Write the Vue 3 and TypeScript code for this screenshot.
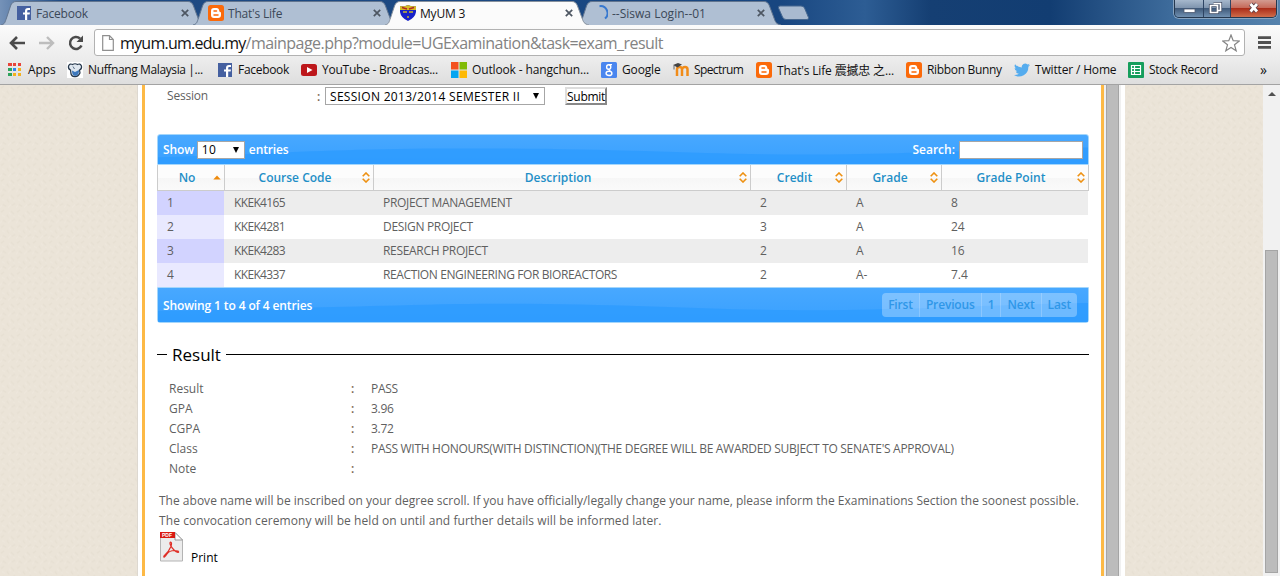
<script setup lang="ts">
interface Tab {
  icon: string;
  title: string;
  active?: boolean;
}

interface Bookmark {
  icon: string;
  name: string;
  width: number;
  tracking: number;
}

interface Course {
  no: number;
  code: string;
  description: string;
  credit: number;
  grade: string;
  point: string;
}

const tabs: Tab[] = [
  { icon: 'facebook', title: 'Facebook' },
  { icon: 'blogger', title: "That's Life" },
  { icon: 'crest', title: 'MyUM 3', active: true },
  { icon: 'spinner', title: '--Siswa Login--01' },
];

const bookmarks: Bookmark[] = [
  { icon: 'apps', name: 'Apps', width: 60, tracking: -0.1 },
  { icon: 'nuffnang', name: 'Nuffnang Malaysia |...', width: 150, tracking: -0.38 },
  { icon: 'facebook', name: 'Facebook', width: 84, tracking: -0.3 },
  { icon: 'youtube', name: 'YouTube - Broadcas...', width: 150, tracking: -0.24 },
  { icon: 'outlook', name: 'Outlook - hangchun...', width: 150, tracking: -0.14 },
  { icon: 'google', name: 'Google', width: 72, tracking: -0.15 },
  { icon: 'spectrum', name: 'Spectrum', width: 83, tracking: -0.6 },
  { icon: 'blogger', name: "That's Life 震撼忠 之...", width: 150, tracking: -0.16 },
  { icon: 'blogger', name: 'Ribbon Bunny', width: 108, tracking: -0.33 },
  { icon: 'twitter', name: 'Twitter / Home', width: 114, tracking: -0.16 },
  { icon: 'sheets', name: 'Stock Record', width: 110, tracking: -0.3 },
];

const columns = ['No', 'Course Code', 'Description', 'Credit', 'Grade', 'Grade Point'];

const courses: Course[] = [
  { no: 1, code: 'KKEK4165', description: 'PROJECT MANAGEMENT', credit: 2, grade: 'A', point: '8' },
  { no: 2, code: 'KKEK4281', description: 'DESIGN PROJECT', credit: 3, grade: 'A', point: '24' },
  { no: 3, code: 'KKEK4283', description: 'RESEARCH PROJECT', credit: 2, grade: 'A', point: '16' },
  { no: 4, code: 'KKEK4337', description: 'REACTION ENGINEERING FOR BIOREACTORS', credit: 2, grade: 'A-', point: '7.4' },
];

const results = [
  { label: 'Result', value: 'PASS' },
  { label: 'GPA', value: '3.96' },
  { label: 'CGPA', value: '3.72' },
  { label: 'Class', value: "PASS WITH HONOURS(WITH DISTINCTION)(THE DEGREE WILL BE AWARDED SUBJECT TO SENATE'S APPROVAL)" },
  { label: 'Note', value: '' },
];

const pages = ['First', 'Previous', '1', 'Next', 'Last'];
</script>

<template>
  <!-- shared icon shapes -->
  <svg class="defs" width="0" height="0">
    <symbol id="facebook" viewBox="0 0 16 16">
      <rect x="1" y="1" width="14" height="14" fill="#4560a0" />
      <path d="M9 15V9.500H7V7.500H9V6C9 4 10 3 12 3H14V5H12.500C11.500 5 11.200 5.500 11.200 6.300V7.500H14L13.600 9.500H11.200V15Z" fill="#fff" />
    </symbol>
    <symbol id="blogger" viewBox="0 0 16 16">
      <rect width="16" height="16" rx="2.500" fill="#fb6a0a" />
      <path d="M6 3H8.500Q11 3 11.300 6Q11.400 7 12.200 7T13 8V10Q13 13 10 13H6Q3 13 3 10V6Q3 3 6 3Z" fill="#fff" />
      <path d="M6 6H8.500M6 10H10" stroke="#fb6a0a" stroke-width="1.500" stroke-linecap="round" />
    </symbol>
    <symbol id="crest" viewBox="0 0 16 16">
      <path d="M0 1Q4 2 8 0Q12 2 16 1V7Q15 13 8 16Q1 13 0 7Z" fill="#1722c8" />
      <path d="M0 1Q4 2 8 0Q12 2 16 1V5H0Z" fill="#d6bc24" />
      <path d="M2 2.500L7 4M9 4L14 2.500" stroke="#b52820" stroke-width="1.500" />
      <path d="M3 7H7M9 7H13M7 12L9 12" stroke="#c9b630" stroke-width="1.300" fill="none" />
    </symbol>
    <symbol id="spinner" viewBox="0 0 16 16">
      <path d="M7.500 1.200A7 7 0 0 1 13 13.500" fill="none" stroke="#3778cf" stroke-width="2" />
    </symbol>
    <symbol id="apps" viewBox="0 0 16 16">
      <path d="M1 1H5V4H1ZM6 1H9V4H6ZM11 1H14V4H11Z" fill="#e8443a" />
      <path d="M1 6H5V9H1ZM1 11H5V14H1Z" fill="#2da35c" />
      <path d="M6 6H9V9H6Z" fill="#2c86ef" />
      <path d="M11 6H14V9H11ZM6 11H9V14H6ZM11 11H14V14H11Z" fill="#f3b11f" />
    </symbol>
    <symbol id="nuffnang" viewBox="0 0 16 16">
      <rect width="16" height="16" fill="#fff" />
      <path d="M3.500 8Q1 7 1.500 4Q3 1 5.500 2.500Q8 1 10.500 2.500Q13 1 14.500 4Q15 7 12.500 8L13 11Q11 15 8 14.500Q5 15 4 12Z" fill="#dfe7ef" stroke="#26384c" stroke-width="1.200" />
      <path d="M5 8.500L8 10L12 8Q12.500 13.500 8 14Q5 13.500 5 8.500Z" fill="#3c78bd" />
      <path d="M6 4.500L7.500 7" stroke="#5c7088" />
    </symbol>
    <symbol id="youtube" viewBox="0 0 16 16">
      <rect y="2" width="16" height="12" rx="2.500" fill="#bd171b" />
      <path d="M6 5L11.500 8L6 11Z" fill="#fff" />
    </symbol>
    <symbol id="outlook" viewBox="0 0 16 16">
      <path d="M0 0H7.500V7.500H0Z" fill="#f3511f" />
      <path d="M8.500 0H16V7.500H8.500Z" fill="#80bb06" />
      <path d="M0 8.500H7.500V16H0Z" fill="#06a5f0" />
      <path d="M8.500 8.500H16V16H8.500Z" fill="#fdb905" />
    </symbol>
    <symbol id="google" viewBox="0 0 16 16">
      <rect width="16" height="16" rx="1.500" fill="#4a86ef" />
      <ellipse cx="7.700" cy="5" rx="2.100" ry="2.300" fill="none" stroke="#fff" stroke-width="1.400" />
      <ellipse cx="8" cy="11.400" rx="2.900" ry="2.100" fill="none" stroke="#fff" stroke-width="1.400" />
      <path d="M8 2.600H11M7.600 7.300L9.500 9.300" stroke="#fff" stroke-width="1.200" />
    </symbol>
    <symbol id="spectrum" viewBox="0 0 16 16">
      <path d="M4 14V7.500Q4 5 6.500 5T9 7.500V14M9 7.500Q9.500 5 12 5T14.500 7.500V14" fill="none" stroke="#f18c19" stroke-width="2.500" />
      <path d="M0 3L5 1L9 2.500L4.500 5.500Z" fill="#444" />
      <path d="M1 3.500V7.500" stroke="#666" />
    </symbol>
    <symbol id="twitter" viewBox="0 0 24 24">
      <path d="M24 4.600a10 10 0 0 1-2.800.8 5 5 0 0 0 2.100-2.700 10 10 0 0 1-3.100 1.200 4.900 4.900 0 0 0-8.400 4.500A14 14 0 0 1 1.700 3.200a4.900 4.900 0 0 0 1.500 6.500 4.900 4.900 0 0 1-2.200-.6 4.900 4.900 0 0 0 3.900 4.900 5 5 0 0 1-2.200.1 4.900 4.900 0 0 0 4.600 3.400A9.900 9.900 0 0 1 0 19.500 14 14 0 0 0 21.500 7.100 10 10 0 0 0 24 4.600z" fill="#55acee" />
    </symbol>
    <symbol id="sheets" viewBox="0 0 16 16">
      <rect width="16" height="16" rx="1" fill="#159e5c" />
      <path d="M3.500 3.500H12.500V12.500H3.500ZM3.500 6.500H12.500M3.500 9.500H12.500M6.500 3.500V12.500" fill="none" stroke="#fff" stroke-width="1.200" />
    </symbol>
    <symbol id="sort-both" viewBox="0 0 8 11">
      <path d="M.7 4.300L4 1L7.300 4.300M.7 6.700L4 10L7.300 6.700" fill="none" stroke="#ee9112" stroke-width="1.600" />
    </symbol>
    <symbol id="sort-asc" viewBox="0 0 8 11">
      <path d="M.3 7.500L4 3.500L7.700 7.500Z" fill="#ee8a0c" />
    </symbol>
    <pattern id="paper" width="16" height="15.500" patternUnits="userSpaceOnUse">
      <rect width="16" height="16" fill="#ebe4d8" />
      <path d="M1 3L4 1M7 6L9 9M11 2L14 5M3 11L6 13M12 12L15 10" stroke="#e7e0d3" stroke-width="1.300" />
      <path d="M2 6L5 8M9 3L11 6M8 14L11 11M13 7L15 8M0 14L2 12" stroke="#eee7dc" stroke-width="1.300" />
    </pattern>
  </svg>

  <div class="browser">
    <header class="titlebar">
      <div v-for="tab in tabs" :key="tab.title" class="tab" :class="{ active: tab.active }">
        <svg class="tab-shape" viewBox="0 0 206 25">
          <path d="M0 25C4 24 4 22 5.500 18L9.500 6Q11 1.500 15 1.500H187Q191 1.500 192.500 6L197 18C198.500 22 199 24 204 25" />
        </svg>
        <svg class="icon"><use :href="'#' + tab.icon" /></svg>
        <span class="tab-title">{{ tab.title }}</span>
        <svg class="close" viewBox="0 0 8 8"><path d="M.8.8L7.200 7.200M7.200.8L.8 7.200" /></svg>
      </div>
      <svg class="new-tab" viewBox="0 0 34 16">
        <path d="M1.500 3Q1 1 3 1H24Q26.500 1 27.500 3L31.500 12.500Q32 14.500 30 14.500H9Q6.500 14.500 5.500 12Z" />
      </svg>
      <div class="window-buttons">
        <div class="win"><svg viewBox="0 0 28 18"><rect x="9" y="9" width="11" height="3.500" fill="#fff" stroke="#4d5970" stroke-width=".8" /></svg></div>
        <div class="win restore">
          <svg viewBox="0 0 28 18">
            <path d="M10.500 3.500H17.500V10.500H15M7.500 5.500H14.500V12.500H7.500Z" fill="none" stroke="#434e66" stroke-width="3.200" />
            <path d="M10.500 3.500H17.500V10.500H15M7.500 5.500H14.500V12.500H7.500Z" fill="none" stroke="#fff" stroke-width="1.700" />
          </svg>
        </div>
        <div class="win exit">
          <svg viewBox="0 0 28 18">
            <path d="M10.500 4L17 11.500M17 4L10.500 11.500" stroke="#553b44" stroke-width="4.400" />
            <path d="M10.500 4L17 11.500M17 4L10.500 11.500" stroke="#fff" stroke-width="2.800" />
          </svg>
        </div>
      </div>
    </header>

    <div class="toolbar">
      <svg class="nav" viewBox="0 0 18 16"><path d="M2 8H16M8 2L2 8L8 14" fill="none" stroke="#4b4b4b" stroke-width="2.600" /></svg>
      <svg class="nav" viewBox="0 0 18 16"><path d="M1 8H15M9 2L15 8L9 14" fill="none" stroke="#bdbdbd" stroke-width="2.400" /></svg>
      <svg class="nav" viewBox="0 0 18 16">
        <path d="M14.500 10.500A6 6 0 1 1 13 3.500" fill="none" stroke="#4b4b4b" stroke-width="2.500" />
        <path d="M16 .5V7H9.500Z" fill="#4b4b4b" />
      </svg>
      <div class="address">
        <svg class="page-icon" viewBox="0 0 12 16"><path d="M.7.7H7.500L11.300 4.500V15.300H.7ZM7.500.7V4.500H11.300" fill="#fff" stroke="#8f8f8f" stroke-width="1.200" /></svg>
        <span class="url"><b>myum.um.edu.my</b>/mainpage.php?module=UGExamination&amp;task=exam_result</span>
        <svg class="star" viewBox="0 0 18 18"><path d="M9 1L11.200 6.700L17.300 7L12.500 10.800L14.200 16.800L9 13.400L3.800 16.800L5.500 10.800L.7 7L6.800 6.700Z" fill="#fff" stroke="#858585" stroke-width="1.200" /></svg>
      </div>
      <svg class="menu" viewBox="0 0 13 13"><path d="M0 1.700H13M0 6.500H13M0 11.300H13" stroke="#505050" stroke-width="2.800" /></svg>
    </div>

    <nav class="bookmarks">
      <div
        v-for="item in bookmarks"
        :key="item.name"
        class="bookmark"
        :style="{ width: item.width + 'px', letterSpacing: item.tracking + 'px' }"
      >
        <svg class="icon"><use :href="'#' + item.icon" /></svg>
        <span>{{ item.name }}</span>
      </div>
      <span class="more">»</span>
    </nav>

    <div class="viewport">
      <svg class="paper left"><rect width="100%" height="100%" fill="url(#paper)" /></svg>
      <main class="page">
        <div class="session">
          <span class="session-label">Session</span>
          <span class="session-colon">:</span>
          <div class="select semester"><span>SESSION 2013/2014 SEMESTER II</span><i></i></div>
          <button class="submit">Submit</button>
        </div>

        <section class="datatable">
          <div class="bar top">
            <svg class="wave" viewBox="0 0 932 30" preserveAspectRatio="none"><path d="M0 23C110 20 170 14 300 14C470 13 560 22 690 20C800 18 860 14 932 13V30H0Z" /></svg>
            <span>Show</span>
            <div class="select length"><span>10</span><i></i></div>
            <span>entries</span>
            <span class="search-label">Search:</span>
            <input class="search" type="text">
          </div>
          <div class="row head">
            <div v-for="(col, i) in columns" :key="col" class="cell">
              <span>{{ col }}</span>
              <svg class="sort"><use :href="i === 0 ? '#sort-asc' : '#sort-both'" /></svg>
            </div>
          </div>
          <div v-for="course in courses" :key="course.no" class="row" :class="{ odd: course.no % 2 }">
            <div class="cell sorted">{{ course.no }}</div>
            <div class="cell code">{{ course.code }}</div>
            <div class="cell description">{{ course.description }}</div>
            <div class="cell">{{ course.credit }}</div>
            <div class="cell">{{ course.grade }}</div>
            <div class="cell">{{ course.point }}</div>
          </div>
          <div class="bar bottom">
            <svg class="wave" viewBox="0 0 932 34" preserveAspectRatio="none"><path d="M0 23C110 21 170 19 300 16C470 14 560 24 690 22C800 20 860 16 932 15V34H0Z" /></svg>
            <span>Showing 1 to 4 of 4 entries</span>
            <div class="pager">
              <span v-for="page in pages" :key="page" class="page-link">{{ page }}</span>
            </div>
          </div>
        </section>

        <h2 class="legend">Result</h2>
        <dl class="results">
          <div v-for="item in results" :key="item.label" class="result">
            <dt>{{ item.label }}</dt>
            <dd class="colon">:</dd>
            <dd class="value">{{ item.value }}</dd>
          </div>
        </dl>
        <p class="notes">
          <span class="inscription">The above name will be inscribed on your degree scroll. If you have officially/legally change your name, please inform the Examinations Section the soonest possible.</span>
          <span class="ceremony">The convocation ceremony will be held on until and further details will be informed later.</span>
        </p>
        <div class="print">
          <svg class="pdf" viewBox="0 0 23 30">
            <path d="M.5.500H15L22.500 8V29H.5Z" fill="#ececec" stroke="#b4b4b4" />
            <path d="M15 .5V8H22.500Z" fill="#fff" stroke="#999" />
            <rect width="15" height="6" fill="#d91a12" />
            <text x="2" y="5" class="pdf-text">PDF</text>
            <path d="M10.500 10C13 10 11 18 4 24C3 26 5 25 7 22C10 18 14 18 18 19C20 21 17 21 14 18C11 15 9 11 10.500 10Z" fill="none" stroke="#df2f27" stroke-width="1.200" />
          </svg>
          <span>Print</span>
        </div>
      </main>
      <div class="inner-scroll"></div>
      <svg class="paper right"><rect width="100%" height="100%" fill="url(#paper)" /></svg>
      <div class="scrollbar">
        <svg class="up" viewBox="0 0 8 4"><path d="M0 4L4 0L8 4Z" fill="#505050" /></svg>
        <div class="thumb"></div>
      </div>
    </div>
  </div>
</template>

<style>
body {
  margin: 0;
  overflow: hidden;
}
</style>

<style scoped>
.browser {
  display: flex;
  flex-direction: column;
  width: 1280px;
  height: 576px;
  overflow: hidden;
  font-family: "Open Sans", "Noto Sans CJK TC", sans-serif;
  font-size: 12px;
  color: #111;
}

.defs {
  position: absolute;
}

.icon {
  flex: none;
  width: 16px;
  height: 16px;
}

/* title bar */
.titlebar {
  display: flex;
  height: 25px;
  flex: none;
  padding-left: 16px;
  background: linear-gradient(90deg, #7592b8 0, #1f4b84 60px, #184680 780px, #2d5d94 865px, #153f73 930px, #123d72 1050px, #3d6b9b 1170px, #5683ad 1280px);
}

.tab {
  position: relative;
  display: flex;
  align-items: center;
  width: 192px;
  height: 26px;
  flex: none;
  color: #3b4858;
}

.tab.active {
  z-index: 2;
  color: #111;
}

.tab-shape {
  position: absolute;
  left: -15px;
  top: 0;
  width: 206px;
  height: 25px;
  fill: #afbfd3;
  stroke: #62758f;
  stroke-width: 1;
}

.active .tab-shape {
  fill: #fbfbfb;
  stroke: #87919d;
}

.tab .icon,
.tab-title,
.close {
  position: relative;
}

.tab-title {
  margin-left: 4px;
  flex: 1;
  letter-spacing: -0.2px;
}

.tab:nth-child(4) .tab-title {
  letter-spacing: 0;
}

.close {
  width: 8px;
  height: 8px;
  margin-right: 19px;
  stroke: #4d5662;
  stroke-width: 1.7;
}

.new-tab {
  width: 34px;
  height: 16px;
  margin: 5px 0 0 -7px;
  fill: #a9bad0;
  stroke: #46678f;
}

.window-buttons {
  display: flex;
  width: 103px;
  height: 18px;
  box-sizing: border-box;
  margin: 0 3px 0 auto;
  border: 1px solid #25384f;
  border-top: 0;
  border-radius: 0 0 5px 5px;
  overflow: hidden;
  box-shadow: 0 0 0 1px #87a3c0;
}

.win {
  display: flex;
  justify-content: center;
  width: 28px;
  border-right: 1px solid #2e4463;
  background: linear-gradient(#a6b8cc 0, #8095af 45%, #3e5878 48%, #7191b2 100%);
}

.win svg {
  flex: none;
  width: 28px;
  height: 18px;
}

.win.restore {
  width: 26px;
}

.win.exit {
  flex: 1;
  border: 0;
  background: linear-gradient(#d39b90 0, #c66a5a 45%, #aa2b18 48%, #cf6c4a 100%);
}

/* toolbar */
.toolbar {
  display: flex;
  align-items: center;
  height: 34px;
  flex: none;
  box-sizing: border-box;
  padding: 1px 9px 0 9px;
  background: linear-gradient(#fbfbfb, #ececec);
}

.nav {
  width: 18px;
  height: 16px;
  margin-right: 11px;
}

.address {
  display: flex;
  align-items: center;
  width: 1151px;
  height: 27px;
  box-sizing: border-box;
  margin-left: -2px;
  padding: 0 4px 0 7px;
  border: 1px solid #b2b2b2;
  border-radius: 3px;
  background: #fff;
}

.page-icon {
  width: 12px;
  height: 16px;
}

.url {
  flex: 1;
  margin-left: 6px;
  font-size: 16px;
  color: #838383;
  letter-spacing: -0.54px;
}

.url b {
  font-weight: 400;
  color: #111;
  letter-spacing: -0.75px;
}

.star {
  width: 18px;
  height: 18px;
}

.menu {
  width: 13px;
  height: 13px;
  margin-left: 13px;
}

/* bookmarks */
.bookmarks {
  display: flex;
  align-items: center;
  height: 26px;
  flex: none;
  box-sizing: border-box;
  padding: 0 0 4px 7px;
  border-bottom: 1px solid #a3a3a3;
  background: linear-gradient(#ececec, #dedede);
}

.bookmark {
  display: flex;
  align-items: center;
  gap: 5px;
  flex: none;
  white-space: nowrap;
}

.more {
  margin-left: 22px;
  font-size: 14px;
}

/* page */
.viewport {
  display: flex;
  flex: 1;
  min-height: 0;
  background: #fff;
}

.paper {
  flex: none;
  height: 491px;
}

.paper.left {
  width: 137px;
  border-right: 1px solid #ddd8d0;
}

.paper.right {
  width: 138px;
  margin-left: 2px;
}

.page {
  width: 932px;
  margin-left: 4px;
  padding: 0 12px;
  border: solid #fdb945;
  border-width: 0 3px;
  color: #5f5f5f;
}

.session {
  display: flex;
  align-items: center;
  height: 22px;
  margin-bottom: 27px;
}

.session-label {
  width: 150px;
  padding: 0 0 1px 10px;
  letter-spacing: -0.2px;
}

.session-colon {
  width: 8px;
}

.select {
  display: flex;
  align-items: center;
  justify-content: space-between;
  height: 18px;
  box-sizing: border-box;
  padding: 0 5px 0 4px;
  border: 1px solid #a6a6a6;
  background: #fff;
  color: #000;
  font-weight: 400;
}

.select i {
  border: solid transparent;
  border-width: 6px 3.5px 0;
  border-top-color: #000;
}

.semester {
  width: 220px;
  letter-spacing: 0.3px;
  white-space: nowrap;
}

.submit {
  width: 42px;
  height: 18px;
  box-sizing: border-box;
  margin-left: 20px;
  padding: 0;
  border: 2px solid;
  border-color: #ddd #888 #888 #ddd;
  background: #fff;
  font: inherit;
  line-height: 15px;
  letter-spacing: -0.3px;
  color: #000;
  white-space: nowrap;
}

.bar {
  position: relative;
  display: flex;
  align-items: center;
  box-sizing: border-box;
  padding: 0 5px;
  border: 1px solid #a4d6fb;
  background: linear-gradient(#48a8ff, #38a0ff);
  color: #fff;
  font-weight: 600;
  letter-spacing: -0.12px;
}

.bar > * {
  position: relative;
}

.bar .wave {
  position: absolute;
  left: 0;
  top: 0;
  width: 100%;
  height: 100%;
  fill: #2c9bff;
  fill-opacity: 0.75;
}

.bar.top {
  height: 31px;
  border-radius: 3px 3px 0 0;
}

.bar.bottom {
  height: 36px;
  border-radius: 0 0 3px 3px;
}

.length {
  width: 48px;
  margin: 0 4px 0 3px;
  letter-spacing: 0.3px;
}

.search-label {
  margin-left: auto;
  letter-spacing: 0;
}

.search {
  width: 124px;
  height: 18px;
  box-sizing: border-box;
  margin-left: 4px;
  border: 1px solid #a6a6a6;
}

.row {
  display: grid;
  grid-template-columns: 67px 149px 377px 96px 95px auto;
  height: 24px;
}

.row.odd {
  margin-right: 1px;
  background: #ededed;
}

.cell {
  display: flex;
  align-items: center;
  padding: 0 0 2px 10px;
}

.code {
  letter-spacing: -0.65px;
}

.description {
  letter-spacing: -0.32px;
}

.row:nth-last-child(2) .description {
  letter-spacing: -0.39px;
}

.sorted {
  background: #e9e9ff;
}

.odd .sorted {
  background: #d2d3ff;
}

.row.head {
  grid-template-columns: 66px 149px 377px 96px 95px auto;
  height: 26px;
  box-sizing: border-box;
  border: 1px solid #ccc;
  border-top: 0;
  background: linear-gradient(#fcfcfc 50%, #f6f6f6 50%, #fafafa);
}

.head .cell {
  border-left: 1px solid #ccc;
  padding: 0 3px 0 0;
  color: #1f8fc7;
  font-weight: 600;
}

.head .cell:first-child {
  border-left: 0;
}

.head .cell span {
  flex: 1;
  padding-left: 3px;
  text-align: center;
}

.sort {
  width: 8px;
  height: 11px;
}

.pager {
  display: flex;
  margin: 0 6px 0 auto;
  border-radius: 4px;
  overflow: hidden;
  background: rgba(255, 255, 255, 0.3);
  color: #2f97e8;
  letter-spacing: -0.15px;
}

.page-link {
  height: 24px;
  box-sizing: border-box;
  padding: 0 6px;
  border-right: 1px solid rgba(255, 255, 255, 0.2);
  line-height: 23px;
}

.page-link:last-child {
  border-right: 0;
}

.legend {
  display: flex;
  align-items: center;
  gap: 5px;
  height: 24px;
  margin: 19px 0 0;
  font-size: 17px;
  font-weight: 400;
  color: #000;
}

.legend::before,
.legend::after {
  content: "";
  width: 10px;
  height: 1px;
  background: #000;
}

.legend::after {
  flex: 1;
}

.results {
  margin: 13px 0 0 12px;
}

.result {
  display: flex;
  height: 20px;
  line-height: 20px;
  white-space: nowrap;
}

.result dt {
  width: 182px;
}

.result dd {
  margin: 0;
}

.result .colon {
  width: 20px;
}

.session-colon,
.colon {
  color: #7d6350;
  font-weight: 600;
}

.result .value {
  letter-spacing: -0.3px;
}

.notes {
  margin: 12px 0 0 2px;
  line-height: 20px;
  white-space: nowrap;
}

.notes span {
  display: block;
}

.inscription {
  letter-spacing: 0.01px;
}

.ceremony {
  letter-spacing: 0.08px;
}

.print {
  display: flex;
  align-items: flex-start;
  margin: 1px 0 0 3px;
  color: #000;
}

.pdf {
  width: 23px;
  height: 30px;
}

.pdf-text {
  font: 700 5px "Liberation Sans", sans-serif;
  fill: #fff;
}

.print span {
  margin: 17px 0 0 8px;
}

/* frame scrollbar inside the page */
.inner-scroll {
  width: 11px;
  margin: 0 4px 0 2px;
  border: solid #a5a5a5;
  border-width: 0 1px;
  background: #bcbcbc;
  box-shadow: 2px 0 #f0f0f0, -2px 0 #f0f0f0;
}

.scrollbar {
  display: flex;
  flex-direction: column;
  align-items: center;
  width: 17px;
  background: #f1f1f1;
}

.up {
  width: 8px;
  height: 4px;
  margin: 7px 0 154px;
}

.thumb {
  width: 11px;
  height: 321px;
  border: 1px solid #a5a5a5;
  background: #bcbcbc;
}
</style>
